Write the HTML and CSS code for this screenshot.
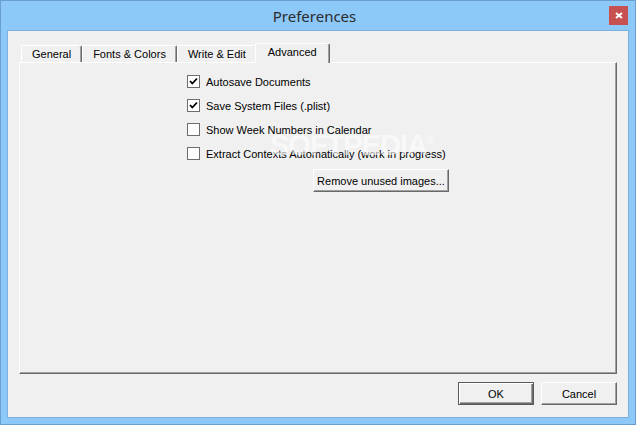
FILE: index.html
```html
<!DOCTYPE html>
<html lang="en">

<head>
    <meta charset="UTF-8">
    <title>Preferences</title>
    <link rel="stylesheet" href="styles.css">
</head>

<body>
    <div class="window">
        <!-- 제목 표시줄 -->
        <div class="titlebar">
            <span></span>
            <span class="title">Preferences</span>
            <span class="close">
                <svg width="8" height="7" viewBox="0 0 8 7">
                    <path d="M1 1 L7 6 M7 1 L1 6" stroke="#fff" stroke-width="2" fill="none"/>
                </svg>
            </span>
        </div>

        <div class="client">
            <div class="tabs">
                <div class="tab">General</div>
                <div class="tab">Fonts &amp; Colors</div>
                <div class="tab">Write &amp; Edit</div>
                <div class="tab active">Advanced</div>
            </div>

            <div class="panel">
                <div class="options">
                    <label class="option">
                        <span class="box">
                            <svg width="11" height="11" viewBox="0 0 11 11"><path d="M2 5 L4.3 7.5 L9 2.5" stroke="#000" stroke-width="1.8" fill="none"/></svg>
                        </span>
                        Autosave Documents
                    </label>
                    <label class="option">
                        <span class="box">
                            <svg width="11" height="11" viewBox="0 0 11 11"><path d="M2 5 L4.3 7.5 L9 2.5" stroke="#000" stroke-width="1.8" fill="none"/></svg>
                        </span>
                        Save System Files (.plist)
                    </label>
                    <label class="option"><span class="box"></span>Show Week Numbers in Calendar</label>
                    <label class="option"><span class="box"></span>Extract Contexts Automatically (work in progress)</label>
                    <button class="btn remove">Remove unused images...</button>
                </div>
                <div class="watermark">SOFTPEDIA<sup>&reg;</sup></div>
            </div>

            <div class="footer">
                <button class="btn default">OK</button>
                <button class="btn">Cancel</button>
            </div>
        </div>
    </div>
</body>

</html>
```

FILE: styles.css
```css
/* 기본 설정 */
body {
    margin: 0;
    font-family: "Liberation Sans", Arial, sans-serif;
    font-size: 11px;
    color: #000;
}

/* 창 테두리 */
.window {
    width: 636px;
    height: 425px;
    box-sizing: border-box;
    border: 1px solid #6a9fd0;
    background-color: #8cc8f8;
    padding: 0 6px 6px;
    display: flex;
    flex-direction: column;
}

.titlebar {
    height: 29px;
    display: grid;
    grid-template-columns: 1fr auto 1fr;
    margin: 0 -6px;
    padding-right: 7px;
}

.title {
    font-family: "Noto Sans", sans-serif;
    font-size: 15px;
    color: #2b2b2b;
    line-height: 30px;
}

.close {
    justify-self: end;
    margin-top: 5px;
    width: 19px;
    height: 19px;
    background-color: #c75050;
    display: flex;
    align-items: center;
    justify-content: center;
}

.close svg {
    display: block;
}

/* 본문 영역 */
.client {
    flex: 1;
    border: 1px solid #7cb0df;
    background-color: #f0f0f0;
    display: flex;
    flex-direction: column;
}

/* 탭 */
.tabs {
    display: flex;
    align-items: flex-end;
    height: 17px;
    margin-top: 14px;
    padding-left: 13px;
}

.tab {
    height: 16px;
    line-height: 16px;
    padding: 0 10px;
    background-color: #f0f0f0;
    border-top: 1px solid #fff;
    border-left: 1px solid #fff;
    border-right: 1px solid #696969;
    box-shadow: inset -1px 0 #a0a0a0;
    border-top-left-radius: 2px;
    border-top-right-radius: 2px;
}

.tab.active {
    position: relative;
    z-index: 1;
    height: 19px;
    line-height: 17px;
    margin: 0 -2px -1px;
    padding: 0 12px;
}

.panel {
    position: relative;
    height: 312px;
    box-sizing: border-box;
    margin: 0 11px;
    border-top: 1px solid #fff;
    border-left: 1px solid #fff;
    border-right: 1px solid #696969;
    border-bottom: 1px solid #696969;
    box-shadow: inset -1px -1px #a0a0a0;
    padding: 10px 0 0 167px;
}

.options {
    width: 262px;
    display: flex;
    flex-direction: column;
    gap: 7px;
}

.option {
    height: 17px;
    display: flex;
    align-items: center;
    gap: 6px;
}

.box {
    width: 11px;
    height: 11px;
    border: 1px solid #6d6d6d;
    background-color: #fff;
    display: flex;
}

.box svg {
    display: block;
}

/* 버튼 */
.btn {
    font-family: "Liberation Sans", Arial, sans-serif;
    font-size: 11px;
    color: #000;
    background-color: #f0f0f0;
    border: 1px solid;
    border-color: #fff #696969 #696969 #fff;
    box-shadow: inset -1px -1px #a0a0a0;
    padding: 0;
    height: 23px;
}

.btn.remove {
    align-self: flex-end;
    width: 136px;
    height: 23px;
}

.btn.default {
    border: 1px solid #5a5a5a;
    box-shadow: inset 1px 1px #fff, inset -1px -1px #696969, inset -2px -2px #a0a0a0;
}

.footer {
    display: flex;
    justify-content: flex-end;
    gap: 7px;
    margin-top: 8px;
    padding-right: 11px;
}

.footer .btn {
    width: 76px;
}

/* 워터마크 */
.watermark {
    position: absolute;
    left: 250px;
    top: 66px;
    font-size: 29px;
    font-weight: bold;
    letter-spacing: -1px;
    color: rgba(255, 255, 255, 0.6);
}

.watermark sup {
    font-size: 10px;
}
```
